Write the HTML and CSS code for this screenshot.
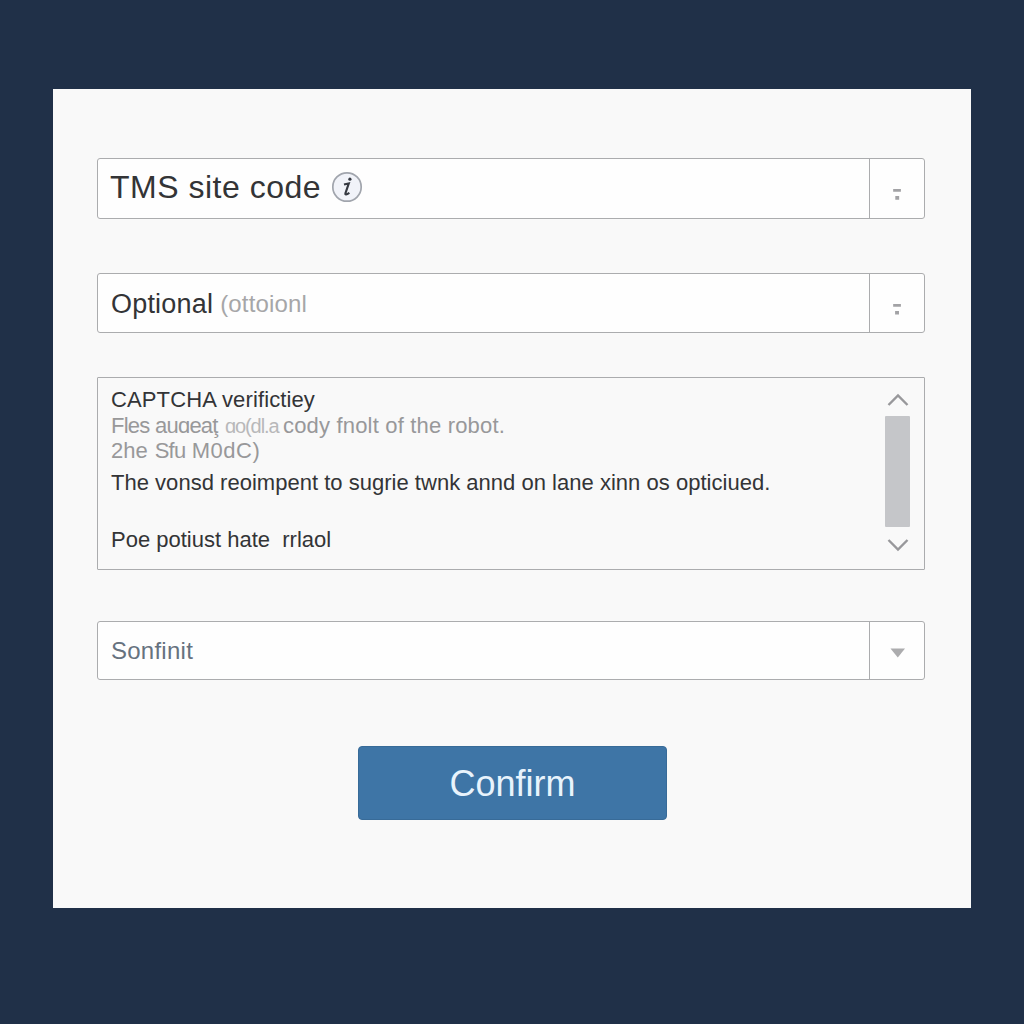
FILE: index.html
```html
<!DOCTYPE html>
<html lang="en">
<head>
<meta charset="utf-8">
<title>TMS site code</title>
<link rel="stylesheet" href="styles.css">
</head>
<body>
<main class="card">
  <div class="field field-site">
    <div class="value"><span class="site-label">TMS site code</span>
      <svg class="info" viewBox="0 0 32 32"><circle cx="16" cy="16" r="14.2" fill="#f1f3f9" stroke="#a1a5ad" stroke-width="1.7"/><path d="M13 13.6L17.8 12.4L14.4 22.4Q13.8 24.8 18.4 21.9" fill="none" stroke="#363a42" stroke-width="2.1"/><circle cx="18.9" cy="8.2" r="1.6" fill="#363a42"/></svg>
    </div>
    <div class="toggle"><svg viewBox="0 0 56 60"><path d="M23 31h8v3h-8zM25.2 38.2h4v4h-4z" fill="#a2a2a5"/></svg></div>
  </div>
  <div class="field field-optional">
    <div class="value"><span class="optional-label">Optional</span><span class="hint">(ottoionl</span></div>
    <div class="toggle"><svg viewBox="0 0 56 60"><path d="M23 31h8v3h-8zM25 38.2h4v3.6h-4z" fill="#a2a2a5"/></svg></div>
  </div>
  <section class="captcha">
    <div class="captcha-text">
      <p class="heading">CAPTCHA verifictiey</p>
      <p class="muted first"><span class="tight">Fles auɑeaţ</span><span class="faint">ɑo(dl.a</span><span class="robot">cody fnolt of the robot.</span></p>
      <p class="muted second"><span>2he</span><span class="narrow">Sfu</span><span class="code">M0dC)</span></p>
      <p class="body">The vonsd reoimpent to sugrie twnk annd on lane xinn os opticiued.</p>
      <p class="footer">Poe potiust hate&nbsp; rrlaol</p>
    </div>
    <div class="scrollbar">
      <svg class="arrow" viewBox="0 0 26 14"><path d="M3.5 12L13 2.5L22.5 12" fill="none" stroke="#98989b" stroke-width="2.4"/></svg>
      <div class="thumb"></div>
      <svg class="arrow" viewBox="0 0 26 14"><path d="M3.5 2L13 11.5L22.5 2" fill="none" stroke="#98989b" stroke-width="2.4"/></svg>
    </div>
  </section>
  <div class="field field-select">
    <div class="value"><span class="select-label">Sonfinit</span></div>
    <div class="toggle"><svg viewBox="0 0 56 58"><path d="M20.5 26.5h14.5l-7.2 9z" fill="#acacae"/></svg></div>
  </div>
  <button class="confirm" type="button">Confirm</button>
</main>
</body>
</html>
```
FILE: styles.css
```css
* { box-sizing: border-box; }
body {
  margin: 0;
  height: 1024px;
  padding: 89px 53px;
  background: #203048;
  font-family: "Liberation Sans", Arial, sans-serif;
  color: #333436;
}
.card {
  display: flex;
  flex-direction: column;
  width: 918px;
  height: 819px;
  padding: 69px 46px 0 44px;
  background: #f9f9f9;
}
.field {
  display: flex;
  flex: none;
  height: 60px;
  border: 1px solid #abacae;
  border-radius: 3px;
  background: #fefefe;
}
.field-site { height: 61px; }
.field-optional { margin-top: 54px; }
.value { display: flex; flex: 1; padding-left: 12px; white-space: nowrap; }
.toggle { width: 55px; border-left: 1px solid #abacae; overflow: hidden; }
.toggle svg { display: block; width: 56px; height: 58px; }
.site-label { font-size: 32px; line-height: 56px; letter-spacing: .5px; }
.info { width: 32px; height: 32px; margin: 12px 0 0 10px; }
.optional-label { padding-left: 1px; font-size: 27px; line-height: 60px; letter-spacing: .2px; }
.hint { margin-left: 7px; font-size: 24px; line-height: 60px; letter-spacing: .15px; color: #a6a6a8; }
.captcha {
  display: flex;
  flex: none;
  justify-content: space-between;
  height: 193px;
  margin-top: 44px;
  padding: 9px 13px 0 13px;
  border: 1px solid #abacae;
  border-radius: 1px;
  background: #f9f9f9;
}
.captcha p { margin: 0; font-size: 22px; line-height: 26px; white-space: pre; }
.captcha .heading { letter-spacing: .12px; }
.captcha .muted { display: flex; color: #98989a; }
.first .tight { width: 114px; letter-spacing: -.75px; }
.first .faint { width: 58px; font-size: 20px; letter-spacing: -1.1px; color: #b8b8ba; }
.first .robot { letter-spacing: .18px; }
.captcha .second { gap: 7px; line-height: 24px; }
.second .narrow { width: 30px; letter-spacing: -.8px; }
.second .code { letter-spacing: .5px; }
.captcha .body { margin-top: 7px; letter-spacing: .02px; }
.captcha .footer { margin-top: 31px; }
.scrollbar { display: flex; flex-direction: column; width: 26px; padding-top: 6px; }
.arrow { flex: none; width: 26px; height: 14px; }
.thumb { width: 25px; height: 111px; margin: 9px 0 11px; border-radius: 1px; background: #c5c6c9; }
.field-select { height: 59px; margin-top: 51px; }
.select-label { padding-left: 1px; font-size: 24px; line-height: 58px; letter-spacing: .25px; color: #66727f; }
.confirm {
  align-self: center;
  width: 309px;
  height: 74px;
  margin: 66px 0 0 3px;
  padding: 1px 0 0;
  border: 1px solid #386b98;
  border-radius: 4px;
  background: #3e75a6;
  color: #e8f3fc;
  font: 36px/71px "Liberation Sans", Arial, sans-serif;
}
```
